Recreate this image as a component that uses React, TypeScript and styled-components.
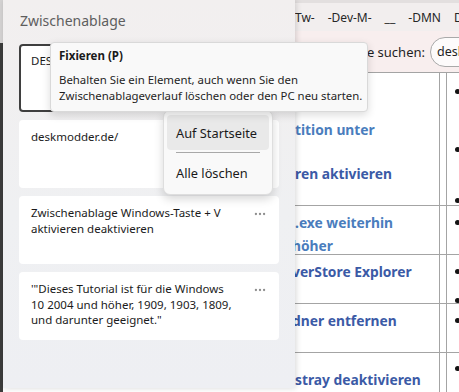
import styled, { createGlobalStyle } from "styled-components";
import { Ellipsis } from "lucide-react";

const GlobalStyle = createGlobalStyle`
  html, body {
    margin: 0;
    padding: 0;
    background: #ffffff;
  }
  body {
    font-family: "Segoe UI", "Noto Sans", sans-serif;
  }
  * {
    box-sizing: border-box;
  }
`;

const Screen = styled.div`
  position: relative;
  width: 459px;
  height: 392px;
  overflow: hidden;
  display: flex;
  background: #e9e9ec;
`;

// schmaler Rand vom Fenster dahinter
const DesktopEdge = styled.div`
  flex: 0 0 3px;
  background: linear-gradient(#d6d4d4 0 43px, #3c3c3c 43px);
`;

const Browser = styled.div`
  flex: 1;
  min-width: 0;
  display: flex;
  flex-direction: column;
  background: #ffffff;
`;

const BookmarkBar = styled.div`
  flex: none;
  height: 31px;
  display: flex;
  align-items: center;
  gap: 13px;
  padding: 3px 0 0 292px;
  background: linear-gradient(#e3dfdf 0 3px, #f2eeee 3px);
  font-size: 12px;
  color: #262626;
  white-space: nowrap;
`;

const Bookmark = styled.span`
  flex: none;
`;

const FindBar = styled.div`
  flex: none;
  height: 41px;
  display: grid;
  grid-template-columns: 422px 200px;
  column-gap: 5px;
  align-items: center;
  background: #f8eeee;
  font-size: 13px;
  color: #1f1f1f;
`;

const FindLabel = styled.label`
  text-align: right;
  white-space: nowrap;
`;

const FindInput = styled.input`
  height: 30px;
  padding: 0 0 0 6px;
  border: 1px solid #a9a9a9;
  border-radius: 15px;
  background: #fdfbfb;
  font-family: inherit;
  font-size: 12.5px;
  color: #1f1f1f;
  outline: none;
`;

const Table = styled.div`
  flex: none;
  border-top: 1px solid #a4a4a4;
`;

const Row = styled.div<{ $height: number }>`
  display: flex;
  height: ${(p) => p.$height}px;
  border-bottom: 1px solid #a4a4a4;
`;

const LinkCell = styled.div<{ $padTop: number; $gap?: number }>`
  flex: 0 0 437px;
  margin-right: 6px;
  display: flex;
  flex-direction: column;
  gap: ${(p) => p.$gap ?? 0}px;
  padding: ${(p) => p.$padTop}px 0 0 292px;
  border-right: 1px solid #a4a4a4;
`;

const PostLink = styled.a<{ $visited?: boolean; $shift?: number }>`
  display: block;
  margin-left: ${(p) => p.$shift ?? 0}px;
  font-size: 13.8px;
  font-weight: 700;
  line-height: 23px;
  white-space: nowrap;
  text-decoration: none;
  color: ${(p) => (p.$visited ? "#3b5aa6" : "#4a7dbd")};
`;

const BulletCell = styled.ul<{ $padTop: number }>`
  flex: 1;
  margin: 0;
  padding: ${(p) => p.$padTop}px 0 0 8px;
  list-style: none;
  border-left: 1px solid #a4a4a4;
`;

const BulletItem = styled.li<{ $height?: number }>`
  height: ${(p) => p.$height ?? 21}px;
  &::before {
    content: "";
    display: block;
    width: 5px;
    height: 5px;
    margin-top: 8px;
    border-radius: 50%;
    background: #141414;
  }
`;

const ClipboardPanel = styled.aside`
  position: absolute;
  left: 3px;
  top: 0;
  width: 292px;
  height: 388px;
  padding: 11px 16px 0;
  display: flex;
  flex-direction: column;
  gap: 13px;
  background: linear-gradient(180deg, #f2efef 0%, #eff0f2 55%, #eeeff3 100%);
  box-shadow: 1px 0 6px rgba(0, 0, 0, 0.16);
  z-index: 1;
`;

const PanelTitle = styled.h1`
  margin: 0 0 0 1px;
  font-size: 14px;
  font-weight: 400;
  line-height: 20px;
  color: #5e5e5e;
`;

const ClipList = styled.div`
  display: flex;
  flex-direction: column;
  gap: 8px;
`;

const ClipCard = styled.div<{ $selected?: boolean }>`
  height: 68px;
  display: flex;
  justify-content: space-between;
  align-items: flex-start;
  padding: 9px 12px 0 12px;
  border-radius: 4px;
  background: #ffffff;
  box-shadow: ${(p) => (p.$selected ? "inset 0 0 0 2px #3f3f3f" : "none")};
`;

const ClipText = styled.div`
  width: 206px;
  font-size: 11.5px;
  line-height: 15.5px;
  color: #1b1b1b;
`;

const MoreButton = styled.span`
  display: flex;
  margin-top: 2px;
  color: #8e8e8e;
`;

const Tooltip = styled.div`
  position: absolute;
  left: 50px;
  top: 42px;
  width: 318px;
  height: 70px;
  padding: 5px 8px 0;
  border: 1px solid #d9d9d9;
  border-radius: 4px;
  background: #f9f9f9;
  box-shadow: 0 3px 8px rgba(0, 0, 0, 0.14);
  z-index: 3;
`;

const TooltipTitle = styled.div`
  margin-bottom: 8px;
  font-size: 11.5px;
  font-weight: 700;
  line-height: 16px;
  color: #1a1a1a;
`;

const TooltipBody = styled.p`
  margin: 0;
  font-size: 11.4px;
  line-height: 16px;
  white-space: nowrap;
  color: #1f1f1f;
`;

const ContextMenu = styled.ul`
  position: absolute;
  left: 163px;
  top: 110px;
  width: 110px;
  margin: 0;
  padding: 4px 3px;
  list-style: none;
  border: 1px solid #dedede;
  border-radius: 7px;
  background: #f9f9f9;
  box-shadow: 0 4px 10px rgba(0, 0, 0, 0.16);
  z-index: 2;
`;

const MenuItem = styled.li<{ $active?: boolean }>`
  height: 35px;
  display: flex;
  align-items: center;
  padding-left: 9px;
  border-radius: 4px;
  background: ${(p) => (p.$active ? "#e9e9e9" : "transparent")};
  font-size: 12.8px;
  color: #1a1a1a;
`;

const MenuSeparator = styled.li`
  height: 1px;
  margin: 2px 9px;
  background: #a8a8a8;
`;

const clips = [
  { id: 1, text: "DESKMODDER", selected: true },
  { id: 2, text: "deskmodder.de/" },
  { id: 3, text: "Zwischenablage Windows-Taste + V aktivieren deaktivieren" },
  {
    id: 4,
    text: "'\"Dieses Tutorial ist für die Windows 10 2004 und höher, 1909, 1903, 1809, und darunter geeignet.\"",
  },
];

function App() {
  return (
    <>
      <GlobalStyle />
      <Screen>
        <DesktopEdge />
        <Browser>
          <BookmarkBar>
            <Bookmark>Tw-</Bookmark>
            <Bookmark>-Dev-M-</Bookmark>
            <Bookmark>__</Bookmark>
            <Bookmark>-DMN</Bookmark>
            <Bookmark>DMN-</Bookmark>
          </BookmarkBar>
          <FindBar>
            <FindLabel>Auf dieser Seite suchen:</FindLabel>
            <FindInput readOnly value="deskmodder" />
          </FindBar>
          <Table>
            <Row $height={133}>
              <LinkCell $padTop={45} $gap={21}>
                <PostLink href="#">tition unter</PostLink>
                <PostLink href="#" $visited>ren aktivieren</PostLink>
              </LinkCell>
              <BulletCell $padTop={8}>
                <BulletItem $height={50} />
                <BulletItem $height={43} />
                <BulletItem />
              </BulletCell>
            </Row>
            <Row $height={49}>
              <LinkCell $padTop={5}>
                <PostLink href="#">.exe weiterhin</PostLink>
                <PostLink href="#" $shift={-3}>höher</PostLink>
              </LinkCell>
              <BulletCell $padTop={6}>
                <BulletItem />
              </BulletCell>
            </Row>
            <Row $height={49}>
              <LinkCell $padTop={5}>
                <PostLink href="#" $visited $shift={-3}>verStore Explorer</PostLink>
              </LinkCell>
              <BulletCell $padTop={6}>
                <BulletItem />
                <BulletItem />
              </BulletCell>
            </Row>
            <Row $height={49}>
              <LinkCell $padTop={5}>
                <PostLink href="#" $visited $shift={-3}>dner entfernen</PostLink>
              </LinkCell>
              <BulletCell $padTop={6}>
                <BulletItem />
              </BulletCell>
            </Row>
            <Row $height={60}>
              <LinkCell $padTop={15}>
                <PostLink href="#" $visited>stray deaktivieren</PostLink>
              </LinkCell>
              <BulletCell $padTop={5}>
                <BulletItem $height={19} />
                <BulletItem />
              </BulletCell>
            </Row>
          </Table>
        </Browser>

        <ClipboardPanel>
          <PanelTitle>Zwischenablage</PanelTitle>
          <ClipList>
            {clips.map((clip) => (
              <ClipCard key={clip.id} $selected={clip.selected}>
                <ClipText>{clip.text}</ClipText>
                <MoreButton>
                  <Ellipsis size={14} strokeWidth={2} />
                </MoreButton>
              </ClipCard>
            ))}
          </ClipList>
        </ClipboardPanel>

        <Tooltip>
          <TooltipTitle>Fixieren (P)</TooltipTitle>
          <TooltipBody>
            Behalten Sie ein Element, auch wenn Sie den
            <br />
            Zwischenablageverlauf löschen oder den PC neu starten.
          </TooltipBody>
        </Tooltip>

        <ContextMenu>
          <MenuItem $active>Auf Startseite</MenuItem>
          <MenuSeparator />
          <MenuItem>Alle löschen</MenuItem>
        </ContextMenu>
      </Screen>
    </>
  );
}

export default App;
